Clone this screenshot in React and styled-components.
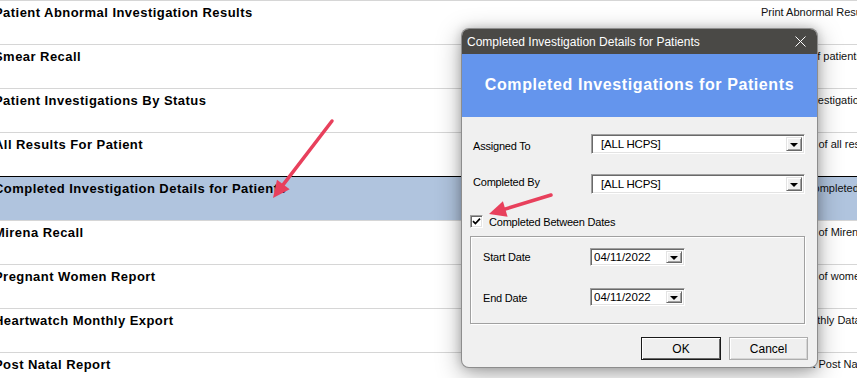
import React from "react";
import styled, { createGlobalStyle, css } from "styled-components";

const GlobalStyle = createGlobalStyle`
  html, body { margin: 0; padding: 0; background: #ffffff; overflow: hidden; }
  #root { width: 857px; height: 378px; }
`;

const Page = styled.div`
  position: relative;
  width: 857px;
  height: 378px;
  overflow: hidden;
  background: #fff;
`;

const List = styled.div`
  display: flex;
  flex-direction: column;
`;

const Row = styled.div`
  display: grid;
  grid-template-columns: 767px 1fr;
  height: 43px;
  border-top: 1px solid #d6d6d6;
  margin-left: -6px;
  ${(p) =>
    p.$selected &&
    css`
      background: #b0c4de;
      border-top-color: #000;
    `}
`;

const Name = styled.div`
  font-family: "Liberation Sans", Arial, sans-serif;
  font-weight: bold;
  font-size: 13px;
  letter-spacing: 0.45px;
  color: #000;
  padding-top: 4px;
  white-space: nowrap;
`;

const Desc = styled.div`
  font-family: "Liberation Sans", Arial, sans-serif;
  font-size: 11px;
  color: #111;
  padding-top: 5px;
  white-space: nowrap;
  overflow: hidden;
`;

const Dialog = styled.div`
  position: absolute;
  left: 461px;
  top: 28px;
  width: 357px;
  height: 340px;
  box-sizing: border-box;
  border: 1px solid rgba(60, 60, 60, 0.55);
  border-radius: 8px;
  overflow: hidden;
  background: #f0f0f0;
  box-shadow: 0 6px 24px rgba(0, 0, 0, 0.34), 0 0 10px rgba(0, 0, 0, 0.18);
  display: flex;
  flex-direction: column;
`;

const TitleBar = styled.div`
  height: 25px;
  flex: none;
  background: #4a4946;
  color: #fff;
  display: flex;
  align-items: center;
  justify-content: space-between;
  padding: 0 11px 0 5px;
  font-family: "Liberation Sans", Arial, sans-serif;
  font-size: 12px;
`;

const Header = styled.div`
  height: 63px;
  flex: none;
  background: #6495ed;
  color: #fff;
  display: flex;
  align-items: center;
  justify-content: center;
  font-family: "Liberation Sans", Arial, sans-serif;
  font-weight: bold;
  font-size: 16px;
  letter-spacing: 0.6px;
  padding-bottom: 2px;
  box-sizing: border-box;
`;

const Body = styled.div`
  flex: 1;
  display: flex;
  flex-direction: column;
  padding: 17px 9px 0 9px;
  font-family: "Liberation Sans", Arial, sans-serif;
  font-size: 11px;
  letter-spacing: -0.2px;
  color: #000;
`;

const FieldRow = styled.div`
  display: grid;
  grid-template-columns: ${(p) => p.$labelWidth}px ${(p) => p.$fieldWidth}px;
  align-items: center;
  height: ${(p) => p.$h}px;
  margin-top: ${(p) => p.$mt || 0}px;
`;

const Label = styled.span`
  padding-left: 2px;
  position: relative;
  top: ${(p) => p.$dy || 0}px;
`;

const Combo = styled.div`
  display: flex;
  align-items: stretch;
  height: ${(p) => p.$h}px;
  box-sizing: border-box;
  background: #fff;
  border-top: 1px solid #a0a0a0;
  border-left: 1px solid #a0a0a0;
  border-bottom: 1px solid #fff;
  border-right: 1px solid #fff;
  box-shadow: inset 1px 1px 0 #696969, inset -1px -1px 0 #e3e3e3;
  padding: 2px;
`;

const ComboText = styled.div`
  flex: 1;
  display: flex;
  align-items: center;
  padding-left: ${(p) => p.$pl}px;
  font-size: ${(p) => p.$fs || 11.5}px;
  letter-spacing: ${(p) => (p.$fs ? "0px" : "-0.2px")};
`;

const DropButton = styled.div`
  width: 16px;
  flex: none;
  box-sizing: border-box;
  background: #f0f0f0;
  border-top: 1px solid #e3e3e3;
  border-left: 1px solid #e3e3e3;
  border-bottom: 1px solid #696969;
  border-right: 1px solid #696969;
  box-shadow: inset 1px 1px 0 #fff, inset -1px -1px 0 #a0a0a0;
  display: flex;
  align-items: center;
  justify-content: center;
  &::after {
    content: "";
    display: block;
    width: 0;
    height: 0;
    border-left: 4px solid transparent;
    border-right: 4px solid transparent;
    border-top: 4px solid #000;
    margin-top: 1px;
  }
`;

const CheckRow = styled.label`
  display: flex;
  align-items: center;
  gap: 6px;
  height: 13px;
  margin-top: 21px;
  margin-left: -1px;
`;

const CheckBox = styled.span`
  width: 13px;
  height: 13px;
  box-sizing: border-box;
  background: #fff;
  border-top: 1px solid #a0a0a0;
  border-left: 1px solid #a0a0a0;
  border-bottom: 1px solid #fff;
  border-right: 1px solid #fff;
  box-shadow: inset 1px 1px 0 #696969, inset -1px -1px 0 #e3e3e3;
  display: flex;
  align-items: center;
  justify-content: center;
`;

const GroupBox = styled.div`
  margin-top: 8px;
  margin-left: -1px;
  width: 335px;
  height: 88px;
  box-sizing: border-box;
  border: 1px solid #a0a0a0;
  box-shadow: inset 1px 1px 0 #fff, 1px 1px 0 #fff;
  padding: 11px 0 0 10px;
  display: flex;
  flex-direction: column;
`;

const ButtonRow = styled.div`
  display: flex;
  justify-content: flex-end;
  gap: 8px;
  margin-top: 13px;
`;

const Button = styled.div`
  width: ${(p) => p.$w}px;
  height: 23px;
  box-sizing: border-box;
  display: flex;
  align-items: center;
  justify-content: center;
  background: #efefef;
  font-size: 12px;
  letter-spacing: 0;
  ${(p) =>
    p.$default
      ? css`
          border: 1px solid #1a1a1a;
          box-shadow: inset 1px 1px 0 #fff, inset -1px -1px 0 #696969;
        `
      : css`
          border: 1px solid #adadad;
          box-shadow: inset 1px 1px 0 #fff, inset -1px -1px 0 #d5d5d5;
        `}
`;

const Overlay = styled.svg`
  position: absolute;
  left: 0;
  top: 0;
  pointer-events: none;
`;

const rows = [
  ["Patient Abnormal Investigation Results", "Print Abnormal Results"],
  ["Smear Recall", "Recall list of patients"],
  ["Patient Investigations By Status", "Patients investigations by status"],
  ["All Results For Patient", "Printout list of all results"],
  ["Completed Investigation Details for Patients", "Listing of completed investigations", true],
  ["Mirena Recall", "Printout list of Mirena"],
  ["Pregnant Women Report", "Printout list of women"],
  ["Heartwatch Monthly Export", "Export Monthly Data"],
  ["Post Natal Report", "Printout list Post Natal"],
];

function Arrow({ x1, y1, x2, y2 }) {
  const dx = x2 - x1;
  const dy = y2 - y1;
  const len = Math.hypot(dx, dy);
  const ux = dx / len;
  const uy = dy / len;
  const hl = 17;
  const hw = 8;
  const bx = x2 - ux * hl;
  const by = y2 - uy * hl;
  const px = -uy;
  const py = ux;
  const pts = `${x2},${y2} ${bx + px * hw},${by + py * hw} ${bx - px * hw},${by - py * hw}`;
  return (
    <g>
      <line x1={x1} y1={y1} x2={bx + ux * 3} y2={by + uy * 3} stroke="#e8405c" strokeWidth="3.5" strokeLinecap="round" />
      <polygon points={pts} fill="#e8405c" />
    </g>
  );
}

const Tick = () => (
  <svg width="9" height="9" viewBox="0 0 9 9">
    <path d="M1 4.2 L3.4 6.6 L8 1.6" stroke="#000" strokeWidth="1.7" fill="none" />
  </svg>
);

const CloseIcon = () => (
  <svg width="11" height="11" viewBox="0 0 11 11">
    <path d="M0.5 0.5 L10.5 10.5 M10.5 0.5 L0.5 10.5" stroke="#fff" strokeWidth="1" />
  </svg>
);

export default function App() {
  return (
    <Page>
      <GlobalStyle />
      <List>
        {rows.map(([name, desc, sel]) => (
          <Row key={name} $selected={sel}>
            <Name>{name}</Name>
            <Desc>{desc}</Desc>
          </Row>
        ))}
      </List>

      <Dialog>
        <TitleBar>
          <span>Completed Investigation Details for Patients</span>
          <CloseIcon />
        </TitleBar>
        <Header>Completed Investigations for Patients</Header>
        <Body>
          <FieldRow $labelWidth={120} $fieldWidth={214} $h={20}>
            <Label $dy={2}>Assigned To</Label>
            <Combo $h={20}>
              <ComboText $pl={7}>[ALL HCPS]</ComboText>
              <DropButton />
            </Combo>
          </FieldRow>
          <FieldRow $labelWidth={120} $fieldWidth={214} $h={20} $mt={20}>
            <Label $dy={-2}>Completed By</Label>
            <Combo $h={20}>
              <ComboText $pl={7}>[ALL HCPS]</ComboText>
              <DropButton />
            </Combo>
          </FieldRow>
          <CheckRow>
            <CheckBox>
              <Tick />
            </CheckBox>
            <span>Completed Between Dates</span>
          </CheckRow>
          <GroupBox>
            <FieldRow $labelWidth={109} $fieldWidth={95} $h={18}>
              <Label $dy={0}>Start Date</Label>
              <Combo $h={18}>
                <ComboText $pl={1} $fs={11.5}>04/11/2022</ComboText>
                <DropButton />
              </Combo>
            </FieldRow>
            <FieldRow $labelWidth={109} $fieldWidth={95} $h={18} $mt={22}>
              <Label $dy={1}>End Date</Label>
              <Combo $h={18}>
                <ComboText $pl={1} $fs={11.5}>04/11/2022</ComboText>
                <DropButton />
              </Combo>
            </FieldRow>
          </GroupBox>
          <ButtonRow>
            <Button $w={80} $default>OK</Button>
            <Button $w={79}>Cancel</Button>
          </ButtonRow>
        </Body>
      </Dialog>

      <Overlay width="857" height="378" viewBox="0 0 857 378">
        <Arrow x1={332} y1={121} x2={273} y2={198} />
        <Arrow x1={551} y1={195} x2={489} y2={214} />
      </Overlay>
    </Page>
  );
}
